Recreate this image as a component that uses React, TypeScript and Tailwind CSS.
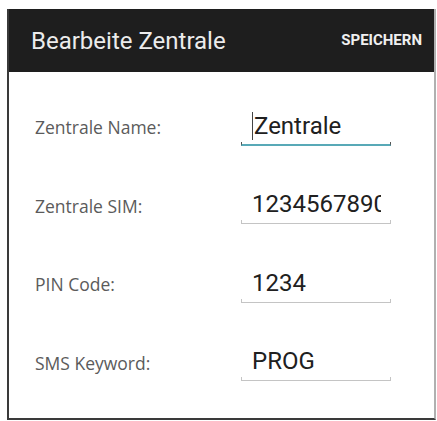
import React from 'react'

type Field = {
  label: string
  value: string
  focused?: boolean
}

const fields: Field[] = [
  { label: 'Zentrale Name:', value: 'Zentrale', focused: true },
  { label: 'Zentrale SIM:', value: '1234567890' },
  { label: 'PIN Code:', value: '1234' },
  { label: 'SMS Keyword:', value: 'PROG' },
]

function EditText({ value, focused }: { value: string; focused?: boolean }) {
  return (
    <div className="w-[150px] pt-[2px] flex flex-col">
      <div className="h-[30px] pl-[11px] pr-[10px]">
        {/* inner box clips long values at the text area's edge */}
        <div className="h-full overflow-hidden whitespace-nowrap flex items-center text-[24px] leading-[30px] text-[#202020]">
          {focused && <span className="inline-block shrink-0 w-px h-[28px] bg-[#444] mr-[1px]" />}
          <span className="shrink-0">{value}</span>
        </div>
      </div>
      <div
        className={
          focused
            ? 'mt-[1px] h-[4px] border-x border-b-2 border-x-[#555] border-b-[#58a9b7]'
            : 'mt-[1px] h-[4px] border-x border-b border-[#c4c4c4]'
        }
      />
    </div>
  )
}

export default function App() {
  return (
    <div className="w-[437px] h-[421px] bg-white pt-[9px] pl-[7px] font-['Roboto',sans-serif]">
      <div className="w-[429px] h-[411px] flex flex-col border-l-2 border-l-[#3a3a3a] border-r-2 border-r-[#b0b0b0] border-b-2 border-b-[#3a3a3a]">
        <div className="h-[63px] shrink-0 bg-[#1e1e1e] flex items-center justify-between pl-[22px] pr-[12px]">
          <span className="text-[24px] text-[#ececec]">Bearbeite Zentrale</span>
          <span className="text-[15px] font-bold text-[#f0f0f0]">SPEICHERN</span>
        </div>
        <div className="pt-[16px] pl-[26px]">
          {fields.map((f) => (
            <div key={f.label} className="h-[78.5px] flex items-center">
              <span className="w-[206px] text-[17.5px] text-[#5b5b5b] font-['Open_Sans',sans-serif]">{f.label}</span>
              <EditText value={f.value} focused={f.focused} />
            </div>
          ))}
        </div>
      </div>
    </div>
  )
}
